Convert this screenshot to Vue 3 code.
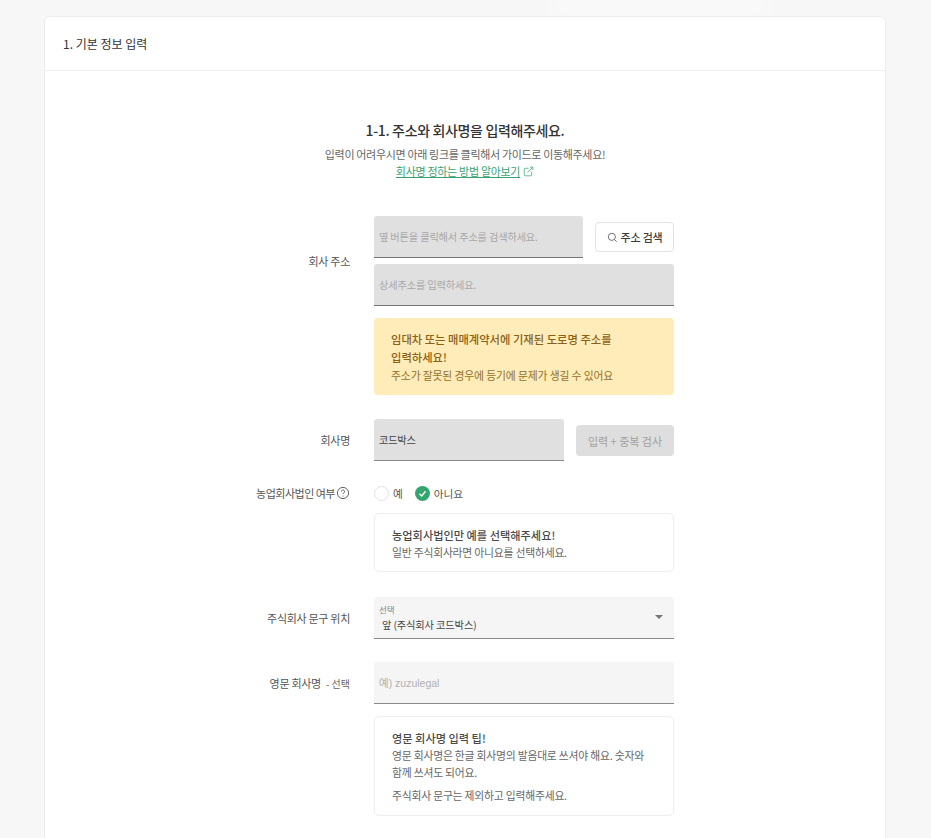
<template>
  <div class="page">
    <div class="fade" aria-hidden="true"></div>
    <section class="card">
      <header class="card__head">1. 기본 정보 입력</header>
      <div class="card__body">
        <div class="intro">
          <h2 class="intro__title">1-1. 주소와 회사명을 입력해주세요.</h2>
          <p class="intro__sub">입력이 어려우시면 아래 링크를 클릭해서 가이드로 이동해주세요!</p>
          <a class="intro__link" href="#">
            <span>회사명 정하는 방법 알아보기</span>
            <svg viewBox="0 0 12 12" class="ext" aria-hidden="true">
              <path d="M6 2.5H2.2a.9.9 0 0 0-.9.9v6.4c0 .5.4.9.9.9h6.4a.9.9 0 0 0 .9-.9V6" />
              <path d="M4.8 7.2 10.6 1.4M7.4 1.2h3.4v3.4" />
            </svg>
          </a>
        </div>

        <div class="form">
          <div class="row">
            <div class="label label--addr">회사 주소</div>
            <div class="col">
              <div class="inline inline--addr">
                <div class="field field--addr"><span class="ph">옆 버튼을 클릭해서 주소를 검색하세요.</span></div>
                <button type="button" class="btn-search">
                  <svg viewBox="0 0 12 12" class="search-ic" aria-hidden="true">
                    <circle cx="5.3" cy="5.3" r="3.9" />
                    <path d="M8.2 8.2 10.6 10.6" />
                  </svg>
                  주소 검색
                </button>
              </div>
              <div class="field field--detail"><span class="ph">상세주소를 입력하세요.</span></div>
              <div class="alert">
                <strong>임대차 또는 매매계약서에 기재된 도로명 주소를<br />입력하세요!</strong>
                <p>주소가 잘못된 경우에 등기에 문제가 생길 수 있어요</p>
              </div>
            </div>
          </div>

          <div class="row row--name">
            <div class="label">회사명</div>
            <div class="inline inline--name">
              <div class="field field--name"><span class="val">코드박스</span></div>
              <button type="button" class="btn-check" disabled>입력 + 중복 검사</button>
            </div>
          </div>

          <div class="row row--farm">
            <div class="label label--farm">
              농업회사법인 여부
              <svg viewBox="0 0 14 14" class="help" aria-hidden="true">
                <circle cx="7" cy="7" r="5.6" />
                <path d="M5.4 5.6a1.6 1.6 0 1 1 2.5 1.3c-.6.4-.9.7-.9 1.3" />
                <circle cx="7" cy="10" r=".5" class="dot" />
              </svg>
            </div>
            <div class="col">
              <div class="radios">
                <label class="radio"><span class="radio__off"></span>예</label>
                <label class="radio">
                  <svg viewBox="0 0 16 16" class="radio__on" aria-hidden="true">
                    <circle cx="8" cy="8" r="8" />
                    <path d="M4.8 8.2 7.2 10.6 11.2 5.6" />
                  </svg>
                  아니요
                </label>
              </div>
              <div class="tip tip--farm">
                <strong>농업회사법인만 예를 선택해주세요!</strong>
                <p>일반 주식회사라면 아니요를 선택하세요.</p>
              </div>
            </div>
          </div>

          <div class="row row--pos">
            <div class="label">주식회사 문구 위치</div>
            <div class="select">
              <span class="select__cap">선택</span>
              <span class="select__val">앞 (주식회사 코드박스)</span>
              <i class="select__caret"></i>
            </div>
          </div>

          <div class="row row--eng">
            <div class="label">영문 회사명<small>- 선택</small></div>
            <div class="col">
              <div class="field field--eng"><span class="ph ph--eng">예) zuzulegal</span></div>
              <div class="tip tip--eng">
                <strong>영문 회사명 입력 팁!</strong>
                <p>영문 회사명은 한글 회사명의 발음대로 쓰셔야 해요. 숫자와 함께 쓰셔도 되어요.</p>
                <p class="tip__gap">주식회사 문구는 제외하고 입력해주세요.</p>
              </div>
            </div>
          </div>
        </div>
      </div>
    </section>
  </div>
</template>

<script setup>
</script>

<style>
html, body { margin: 0; background: #f7f7f7; overflow: hidden; }
</style>

<style scoped>
.page {
  position: relative;
  height: 838px;
  overflow: hidden;
  padding: 16px 44px 0;
  box-sizing: border-box;
  background: #f7f7f7;
  font-family: "Noto Sans CJK KR", "Noto Sans", sans-serif;
  color: #333;
}
.fade {
  position: absolute;
  top: -20px; left: 550px;
  width: 220px; height: 40px;
  background: rgba(255,255,255,.35);
  filter: blur(12px);
}
.card {
  position: relative;
  width: 842px;
  height: 860px;
  box-sizing: border-box;
  background: #fff;
  border: 1px solid #ededed;
  border-radius: 6px;
}
.card__head {
  height: 53px;
  padding-left: 18px;
  display: flex;
  align-items: center;
  font-size: 12px;
  color: #333;
  border-bottom: 1px solid #efefef;
}
.card__body { padding-top: 49px; }

.intro { text-align: center; }
.intro__title { margin: 0; font-size: 14px; letter-spacing: -0.35px; line-height: 20px; font-weight: 500; color: #333; }
.intro__sub { margin: 6px 0 0; font-size: 11px; letter-spacing: -0.33px; line-height: 17px; color: #666; }
.intro__link {
  display: flex; align-items: center; justify-content: center; gap: 3px;
  font-size: 11px; letter-spacing: -0.3px; line-height: 17px; color: #3aa272;
}
.ext { width: 11px; height: 11px; fill: none; stroke: #4aae80; stroke-width: .9; }

.form { margin: 36px 0 0 188px; width: 441px; }
.row { display: grid; grid-template-columns: 117px 300px; column-gap: 24px; }
.row--name { margin-top: 24px; }
.row--farm { margin-top: 24px; }
.row--pos { margin-top: 25px; }
.row--eng { margin-top: 23px; }

.label {
  height: 42px;
  display: flex; align-items: center; justify-content: flex-end;
  font-size: 11px; letter-spacing: -0.3px; color: #555;
  white-space: nowrap;
}
.label--addr { height: 90px; }
.label--farm { height: 16px; gap: 1px; letter-spacing: -0.5px; }
.label small { font-size: 10px; letter-spacing: 0; margin-left: 5px; color: #666; }

.col { display: flex; flex-direction: column; }
.inline { display: flex; }
.inline--addr { gap: 12px; align-items: flex-start; }
.inline--name { gap: 12px; align-items: flex-start; }

.field {
  height: 42px;
  box-sizing: border-box;
  padding-left: 5px;
  display: flex; align-items: center;
  background: #e0e0e0;
  border-bottom: 1px solid #757575;
  border-radius: 3px 3px 0 0;
  font-size: 10.2px;
  letter-spacing: -0.15px;
}
.field--addr { width: 209px; }
.field--detail { margin-top: 6px; }
.field--name { width: 190px; border-bottom-color: #8a8a8a; }
.field--name .val { letter-spacing: -0.2px; }
.field--eng { background: #f5f5f5; border-bottom-color: #8a8a8a; }
.ph { color: #a8a8a8; }
.ph--eng { font-family: "Liberation Sans", "Noto Sans CJK KR", sans-serif; font-size: 10.5px; letter-spacing: 0; color: #b0b0b0; }
.val { color: #444; }

.btn-search {
  margin-top: 6px;
  width: 79px; height: 30px;
  display: inline-flex; align-items: center; justify-content: center; gap: 3px;
  padding: 0;
  background: #fff;
  border: 1px solid #e0e3e7;
  border-radius: 4px;
  font: 500 11px "Noto Sans CJK KR", sans-serif;
  letter-spacing: -0.2px;
  color: #3d3d3d;
}
.search-ic { width: 11px; height: 11px; fill: none; stroke: #666; stroke-width: 1; }

.alert {
  margin-top: 12px;
  height: 77px;
  box-sizing: border-box;
  padding: 12px 17px;
  background: #ffecb8;
  border-radius: 4px;
  color: #94702a;
}
.alert strong { display: block; font-size: 11.3px; line-height: 18px; font-weight: 500; color: #8a6116; }
.alert p { margin: 0; font-size: 10.8px; letter-spacing: -0.12px; line-height: 18px; }

.btn-check {
  margin-top: 6px;
  width: 98px; height: 31px;
  padding: 0;
  background: #dedede;
  border: 0;
  border-radius: 4px;
  font: 400 11px "Noto Sans CJK KR", sans-serif;
  color: #a0a0a0;
}

.help { width: 14px; height: 14px; fill: none; stroke: #555; stroke-width: .9; }
.help .dot { fill: #555; stroke: none; }

.radios { display: flex; gap: 12px; height: 16px; align-items: center; }
.radio { display: inline-flex; align-items: center; gap: 4px; font-size: 10.7px; letter-spacing: -0.1px; color: #555; }
.radio__off {
  width: 15px; height: 15px; box-sizing: border-box;
  border: 1.5px solid #e2e2e2; border-radius: 50%; background: #fff;
}
.radio__on { width: 15px; height: 15px; }
.radio__on circle { fill: #34a56c; }
.radio__on path { fill: none; stroke: #fff; stroke-width: 1.5; }

.tip {
  box-sizing: border-box;
  border: 1px solid #eeeeee;
  border-radius: 5px;
  padding: 12px 17px;
  background: #fff;
  color: #666;
  word-break: keep-all;
}
.tip strong { display: block; font-size: 11.2px; font-weight: 500; line-height: 18px; color: #4a4a4a; }
.tip p { margin: 0; font-size: 10.8px; letter-spacing: -0.2px; line-height: 17px; }
.tip .tip__gap { margin-top: 6px; }
.tip--farm { margin-top: 12px; height: 59px; }
.tip--eng { margin-top: 12px; height: 100px; }

.select {
  position: relative;
  height: 42px;
  box-sizing: border-box;
  background: #f5f5f5;
  border-bottom: 1px solid #8a8a8a;
  border-radius: 3px 3px 0 0;
}
.select__cap { position: absolute; left: 5px; top: 6px; font-size: 8.5px; line-height: 12px; color: #888; }
.select__val { position: absolute; left: 8px; top: 19px; font-size: 10.2px; letter-spacing: -0.1px; line-height: 17px; color: #444; }
.select__caret {
  position: absolute; right: 11px; top: 18px;
  border: 4px solid transparent; border-top: 4px solid #757575; border-bottom: 0;
}
</style>
